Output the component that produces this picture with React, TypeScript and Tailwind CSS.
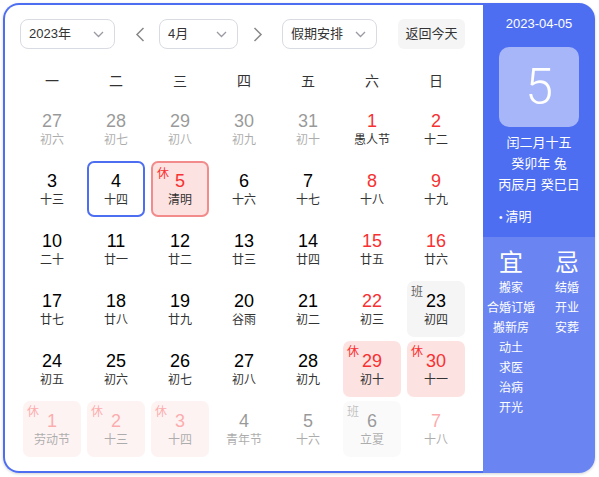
import React from "react";

type Day = {
  n: number;
  l: string;
  red?: boolean;
  other?: boolean;
  tag?: "休" | "班";
  hover?: boolean;
  sel?: boolean;
};

const WEEK = ["一", "二", "三", "四", "五", "六", "日"];

const ROWS: Day[][] = [
  [
    { n: 27, l: "初六", other: true },
    { n: 28, l: "初七", other: true },
    { n: 29, l: "初八", other: true },
    { n: 30, l: "初九", other: true },
    { n: 31, l: "初十", other: true },
    { n: 1, l: "愚人节", red: true },
    { n: 2, l: "十二", red: true },
  ],
  [
    { n: 3, l: "十三" },
    { n: 4, l: "十四", hover: true },
    { n: 5, l: "清明", tag: "休", sel: true },
    { n: 6, l: "十六" },
    { n: 7, l: "十七" },
    { n: 8, l: "十八", red: true },
    { n: 9, l: "十九", red: true },
  ],
  [
    { n: 10, l: "二十" },
    { n: 11, l: "廿一" },
    { n: 12, l: "廿二" },
    { n: 13, l: "廿三" },
    { n: 14, l: "廿四" },
    { n: 15, l: "廿五", red: true },
    { n: 16, l: "廿六", red: true },
  ],
  [
    { n: 17, l: "廿七" },
    { n: 18, l: "廿八" },
    { n: 19, l: "廿九" },
    { n: 20, l: "谷雨" },
    { n: 21, l: "初二" },
    { n: 22, l: "初三", red: true },
    { n: 23, l: "初四", tag: "班" },
  ],
  [
    { n: 24, l: "初五" },
    { n: 25, l: "初六" },
    { n: 26, l: "初七" },
    { n: 27, l: "初八" },
    { n: 28, l: "初九" },
    { n: 29, l: "初十", tag: "休" },
    { n: 30, l: "十一", tag: "休" },
  ],
  [
    { n: 1, l: "劳动节", tag: "休", other: true },
    { n: 2, l: "十三", tag: "休", other: true },
    { n: 3, l: "十四", tag: "休", other: true },
    { n: 4, l: "青年节", other: true },
    { n: 5, l: "十六", other: true },
    { n: 6, l: "立夏", tag: "班", other: true },
    { n: 7, l: "十八", red: true, other: true },
  ],
];

const YI = ["搬家", "合婚订婚", "搬新房", "动土", "求医", "治病", "开光"];
const JI = ["结婚", "开业", "安葬"];

function Chevron() {
  return (
    <svg width="11" height="7" viewBox="0 0 11 7" fill="none">
      <path d="M1 1l4.5 4.5L10 1" stroke="#9a9aa3" strokeWidth="1.3" />
    </svg>
  );
}

function Select({ label, className }: { label: string; className: string }) {
  return (
    <div
      className={`flex h-[30px] items-center justify-between rounded-[8px] border border-[#d9dbe3] bg-white pl-[8px] pr-[10px] text-[13px] text-[#333] ${className}`}
    >
      <span>{label}</span>
      <Chevron />
    </div>
  );
}

function Arrow({ dir }: { dir: "l" | "r" }) {
  return (
    <svg width="10" height="15" viewBox="0 0 10 15" fill="none">
      <path
        d={dir === "l" ? "M8.5 1L2 7.5 8.5 14" : "M1.5 1L8 7.5 1.5 14"}
        stroke="#888"
        strokeWidth="1.5"
      />
    </svg>
  );
}

function Cell({ d }: { d: Day }) {
  let box = "";
  if (d.tag === "休") box = "bg-[#fde2e2]";
  if (d.tag === "班") box = "bg-[#f5f5f6]";
  if (d.sel) box += " border-2 border-[#f28b8b]";
  if (d.hover) box += " border-2 border-[#4e6ef2]";
  if (d.other) box += " opacity-40";

  const red = (d.red && d.tag !== "班") || d.tag === "休";

  return (
    <div
      className={`relative flex h-[56px] flex-col items-center justify-center rounded-[7px] ${box}`}
    >
      {d.tag && (
        <span
          className={`absolute left-[4px] top-[4px] text-[12px] leading-[14px] ${
            d.tag === "休" ? "text-[#f73131]" : "text-[#666]"
          }`}
        >
          {d.tag}
        </span>
      )}
      <span
        className={`text-[18px] leading-[22px] ${red ? "text-[#f73131]" : "text-black"}`}
      >
        {d.n}
      </span>
      <span className="text-[12px] leading-[16px] text-[#333]">{d.l}</span>
    </div>
  );
}

export default function App() {
  return (
    <div className="min-h-screen bg-white pl-[3px] pt-[3px] [font-family:'Liberation_Sans','Noto_Sans_CJK_SC',sans-serif]">
      <div className="flex h-[470px] w-[592px] rounded-[16px] shadow-[0_1px_3px_rgba(0,0,0,0.18)]">
        {/* calendar */}
        <div className="w-[480px] rounded-l-[16px] border-2 border-r-0 border-[#4e6ef2] bg-white px-[15px] pt-[14px]">
          <div className="flex items-center">
            <Select label="2023年" className="w-[95px]" />
            <div className="ml-[20px] flex w-[10px] justify-center">
              <Arrow dir="l" />
            </div>
            <Select label="4月" className="ml-[14px] w-[79px]" />
            <div className="ml-[15px] flex w-[10px] justify-center">
              <Arrow dir="r" />
            </div>
            <Select label="假期安排" className="ml-[19px] w-[95px]" />
            <div className="ml-[21px] flex h-[30px] w-[67px] items-center justify-center rounded-[6px] bg-[#f5f5f6] text-[13px] text-[#333]">
              返回今天
            </div>
          </div>

          <div className="mt-[12px] grid h-[40px] grid-cols-7 items-center">
            {WEEK.map((w) => (
              <div key={w} className="text-center text-[14px] text-[#333]">
                {w}
              </div>
            ))}
          </div>

          <div className="grid grid-cols-7 gap-x-[6px] gap-y-[4px] px-[3px]">
            {ROWS.flat().map((d, i) => (
              <Cell key={i} d={d} />
            ))}
          </div>
        </div>

        {/* side panel */}
        <div className="flex w-[112px] flex-col overflow-hidden rounded-r-[16px] text-white">
          <div className="flex h-[234px] flex-col items-center bg-[#4e6ef2]">
            <div className="mt-[11px] text-[13px] leading-[20px]">2023-04-05</div>
            <div className="mt-[13px] flex h-[80px] w-[80px] items-center justify-center rounded-[10px] bg-[#a6b6f8] text-[50px] font-light [font-family:Roboto,'Liberation_Sans',sans-serif]">
              5
            </div>
            <div className="mt-[5px] text-center text-[13px] leading-[21px]">
              <div>闰二月十五</div>
              <div>癸卯年 兔</div>
              <div>丙辰月 癸巳日</div>
            </div>
            <div className="mt-[11px] w-full pl-[16px] text-[13px] leading-[21px]">
              <span className="mr-[3px] text-[10px]">•</span>清明
            </div>
          </div>
          <div className="grid flex-1 grid-cols-2 bg-[#6a85f2]">
            <div className="flex flex-col items-center">
              <div className="mt-[12px] text-[24px] leading-[28px]">宜</div>
              <div className="mt-[1px] flex flex-col items-center text-[12px] leading-[20px]">
                {YI.map((t) => (
                  <div key={t}>{t}</div>
                ))}
              </div>
            </div>
            <div className="flex flex-col items-center">
              <div className="mt-[12px] text-[24px] leading-[28px]">忌</div>
              <div className="mt-[1px] flex flex-col items-center text-[12px] leading-[20px]">
                {JI.map((t) => (
                  <div key={t}>{t}</div>
                ))}
              </div>
            </div>
          </div>
        </div>
      </div>
    </div>
  );
}
